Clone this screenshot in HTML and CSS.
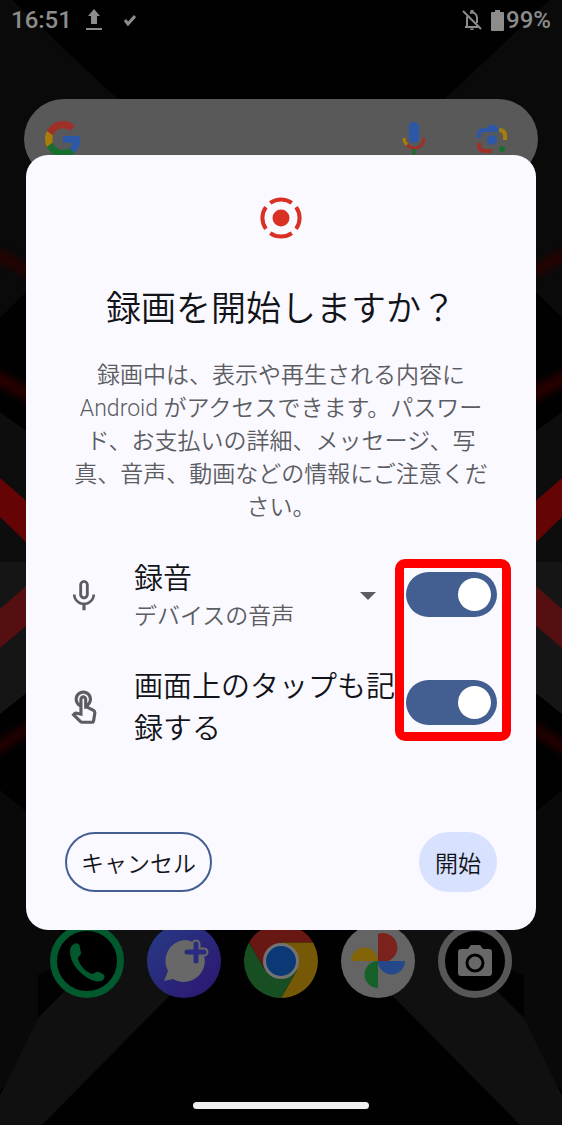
FILE: index.html
```html
<!DOCTYPE html>
<html lang="ja">
<head>
    <meta charset="UTF-8">
    <meta name="viewport" content="width=device-width, initial-scale=1.0">
    <title>画面の録画</title>
    <link rel="stylesheet" href="styles.css">
</head>
<body>

    <div class="phone">

        <!-- Wallpaper -->
        <svg class="wallpaper" viewBox="0 0 562 1125" preserveAspectRatio="none" aria-hidden="true">
            <defs>
                <filter id="glow" x="-50%" y="-10%" width="200%" height="120%">
                    <feGaussianBlur stdDeviation="4"/>
                </filter>
                <g id="wall-half">
                    <path fill="#0a0a0a" d="M0 0H12L140 120V270L26 292 0 318z"/>
                    <path fill="#2c0404" filter="url(#glow)" d="M-9 245l49 28v10L-9 257zM-9 368l49 25v14L-9 382zM-9 746l49-30v10L-9 758zM-9 876l49-30v10L-9 888z"/>
                    <path fill="#0d0d0d" d="M0 412l60 44v106H0z"/>
                    <path fill="#151515" d="M0 562h60v104L0 714z"/>
                    <path fill="#640405" d="M0 478l60 52v45L0 517z"/>
                    <path fill="#560f11" d="M0 609l60-53v41L0 648z"/>
                    <path fill="#090909" d="M0 790l60 50v200L0 1090z"/>
                    <path fill="#020202" d="M38 975l30-12v30l-30 25z"/>
                    <path fill="#101010" d="M70 915H190V975L42 1125H0V1096L38 1018 82 974z"/>
                </g>
            </defs>
            <rect width="562" height="1125" fill="#010101"/>
            <use href="#wall-half"/>
            <use href="#wall-half" transform="matrix(-1 0 0 1 562 0)"/>
        </svg>

        <header class="status-bar">
            <div class="status-group">
                <span>16:51</span>
                <svg class="status-upload" width="18" height="22" viewBox="0 0 18 22" aria-hidden="true">
                    <path fill="currentColor" d="M9 0l6 7h-3v8H6V7H3zM1 19h16v2H1z"/>
                </svg>
                <svg width="12" height="12" viewBox="0 0 12 12" aria-hidden="true">
                    <path fill="none" stroke="currentColor" stroke-width="3" d="M1 6l3 4 7-8"/>
                </svg>
            </div>
            <div class="status-group status-right">
                <svg width="20" height="21" viewBox="0 0 20 21" aria-hidden="true">
                    <g fill="none" stroke="currentColor" stroke-width="2">
                        <path d="M1 1l18 18M3 17h13M5 17V8c0-1 .3-2 1-3M8 3c4-1.500 7 1 7 5v5"/>
                    </g>
                    <path fill="currentColor" d="M8.500 0h3v3h-3zM8 18.500h4c0 2-4 2-4 0z"/>
                </svg>
                <svg class="battery" width="13" height="21" viewBox="0 0 13 21" aria-hidden="true">
                    <path fill="currentColor" d="M4 0h5v2h3q1 0 1 1v17q0 1-1 1H1q-1 0-1-1V3q0-1 1-1h3z"/>
                </svg>
                <span>99%</span>
            </div>
        </header>

        <div class="search-bar">
            <svg class="google" width="36" height="36" viewBox="0 0 48 48" aria-hidden="true">
                <path fill="#9f3028" d="M24 9.500c3.540 0 6.710 1.220 9.210 3.600l6.850-6.850C35.900 2.380 30.470 0 24 0 14.620 0 6.510 5.380 2.560 13.220l7.980 6.190C12.430 13.720 17.740 9.500 24 9.500z"/>
                <path fill="#2d58a8" d="M46.980 24.550c0-1.570-.15-3.090-.38-4.550H24v9.020h12.940c-.58 2.960-2.260 5.480-4.780 7.180l7.730 6c4.510-4.180 7.090-10.360 7.090-17.650z"/>
                <path fill="#a87e08" d="M10.530 28.590c-.48-1.450-.76-2.990-.76-4.590s.27-3.140.76-4.590l-7.980-6.190C.92 16.460 0 20.120 0 24s.92 7.540 2.560 10.780z"/>
                <path fill="#176e2e" d="M24 48c6.480 0 11.930-2.130 15.890-5.810l-7.730-6c-2.150 1.450-4.920 2.300-8.160 2.300-6.260 0-11.570-4.220-13.470-9.910l-7.980 6.190C6.510 42.620 14.620 48 24 48z"/>
            </svg>
            <svg width="24" height="36" viewBox="0 0 24 36" aria-hidden="true">
                <rect x="7" y="1" width="10" height="21" rx="5" fill="#2d58a8"/>
                <path fill="none" stroke="#a87e08" stroke-width="3" d="M2 17c0 3 1 5 3 7"/>
                <path fill="none" stroke="#9f3028" stroke-width="3" d="M5 24c6 6 17 3 17-7"/>
                <path fill="#176e2e" d="M10.500 28h3v8h-3z"/>
            </svg>
            <svg class="lens" width="32" height="32" viewBox="0 0 32 32" aria-hidden="true">
                <g fill="none" stroke-width="4">
                    <path stroke="#2d58a8" d="M3 15v-3q0-5 5-5h15"/>
                    <path stroke="#a87e08" d="M23 7q6 0 6 6v4"/>
                    <path stroke="#9f3028" d="M3 20v2q0 6 6 6h7"/>
                </g>
                <path fill="#2d58a8" d="M10 7l3-5h7l3 5z"/>
                <circle cx="16" cy="17" r="5" fill="#2d58a8"/>
                <circle cx="26" cy="26" r="3" fill="#176e2e"/>
            </svg>
        </div>

        <nav class="dock" aria-label="ドック">
            <a href="#" aria-label="電話">
                <svg viewBox="0 0 74 74">
                    <circle cx="37" cy="37" r="33.500" fill="#000" stroke="#02592d" stroke-width="7"/>
                    <path fill="#02592d" d="M24 20c3-2 6 0 6 4l1 5c0 3-3 3-3 6 2 7 8 13 14 15 3 0 4-3 7-2l4 2c2 1 2 4 0 6-4 3-11 1-17-3C25 45 20 36 20 27c0-4 2-6 4-7z"/>
                </svg>
            </a>
            <a href="#" aria-label="メッセージ">
                <svg viewBox="0 0 74 74">
                    <defs>
                        <linearGradient id="msg" x1="0" y1="0" x2="1" y2="1">
                            <stop offset="0" stop-color="#263c86"/>
                            <stop offset="1" stop-color="#2d1470"/>
                        </linearGradient>
                    </defs>
                    <circle cx="37" cy="37" r="37" fill="url(#msg)"/>
                    <path fill="#686868" d="M37 16a21 21 0 1 1-11 39L17 57l4-10A21 21 0 0 1 37 16z"/>
                    <path fill="none" stroke="#686868" stroke-width="9" stroke-linecap="round" d="M49 20v16M41 28h16"/>
                    <path fill="none" stroke="#2a2a80" stroke-width="5" stroke-linecap="round" d="M49 20v17M40 28h17"/>
                </svg>
            </a>
            <a href="#" aria-label="Chrome">
                <svg viewBox="0 0 74 74">
                    <path fill="#681812" d="M5 18.500A37 37 0 0 1 69 18.500H37L21 46z"/>
                    <path fill="#755907" d="M69 18.500A37 37 0 0 1 37 74l16-28-16-27.500z"/>
                    <path fill="#174f22" d="M5 18.500A37 37 0 0 0 37 74l16-28H21z"/>
                    <circle cx="37" cy="37" r="18" fill="#737373"/>
                    <circle cx="37" cy="37" r="15" fill="#0a3975"/>
                </svg>
            </a>
            <a href="#" aria-label="フォト">
                <svg viewBox="0 0 74 74">
                    <circle cx="37" cy="37" r="37" fill="#646464"/>
                    <path fill="#7b221c" d="M37 10a13.500 13.500 0 0 1 10 27H37z"/>
                    <path fill="#25488b" d="M37 37h27a13.500 13.500 0 0 1-27 0z"/>
                    <path fill="#16602a" d="M37 37v27a13.500 13.500 0 0 1 0-27z"/>
                    <path fill="#836409" d="M37 37H10a13.500 13.500 0 0 1 27 0z"/>
                </svg>
            </a>
            <a href="#" aria-label="カメラ">
                <svg viewBox="0 0 74 74">
                    <circle cx="37" cy="37" r="33.500" fill="#000" stroke="#575757" stroke-width="7"/>
                    <path fill="#686868" d="M23 25h7l3-4h9l3 4h6q3 0 3 3v21q0 3-3 3H23q-3 0-3-3V28q0-3 3-3z"/>
                    <circle cx="37" cy="39" r="8" fill="#686868" stroke="#000" stroke-width="3"/>
                </svg>
            </a>
        </nav>

        <div class="nav-handle"></div>

        <div class="overlay">
            <main class="dialog" role="dialog" aria-labelledby="dialog-title">
                <svg class="record-icon" width="42" height="42" viewBox="0 0 42 42" aria-hidden="true">
                    <circle cx="21" cy="21" r="8.500" fill="#d93025"/>
                    <path fill="none" stroke="#d93025" stroke-width="4" d="M10.200 5.900A18.500 18.500 0 0 1 31.800 5.900M36.100 10.200A18.500 18.500 0 0 1 36.100 31.800M31.800 36.100A18.500 18.500 0 0 1 10.200 36.100M5.900 31.800A18.500 18.500 0 0 1 5.900 10.200"/>
                </svg>
                <h1 class="title" id="dialog-title">録画を開始しますか？</h1>
                <p class="message">録画中は、表示や再生される内容に Android がアクセスできます。パスワード、お支払いの詳細、メッセージ、写真、音声、動画などの情報にご注意ください。</p>

                <div class="options">
                    <div class="option">
                        <svg class="option-icon" viewBox="0 0 24 24" aria-hidden="true">
                            <path fill="currentColor" d="M12 14c1.660 0 3-1.340 3-3V5c0-1.660-1.340-3-3-3S9 3.340 9 5v6c0 1.660 1.340 3 3 3zm-1.200-9.100c0-.66.54-1.200 1.200-1.200s1.200.54 1.200 1.200l-.01 6.200c0 .66-.53 1.200-1.190 1.200s-1.200-.54-1.200-1.200V4.900zM17.300 11c0 3-2.540 5.100-5.300 5.100S6.700 14 6.700 11H5c0 3.410 2.720 6.230 6 6.720V21h2v-3.280c3.280-.48 6-3.300 6-6.720h-1.700z"/>
                        </svg>
                        <div class="option-text">
                            <label class="option-name" for="audio-toggle">録音</label>
                            <select class="audio-source" aria-label="音声の種類">
                                <option>デバイスの音声</option>
                                <option>マイク</option>
                            </select>
                        </div>
                        <svg class="arrow" width="16" height="8" viewBox="0 0 16 8" aria-hidden="true">
                            <path fill="currentColor" d="M0 0h16L8 8z"/>
                        </svg>
                        <input class="switch" type="checkbox" role="switch" id="audio-toggle" checked>
                    </div>
                    <div class="option">
                        <svg class="option-icon" viewBox="0 0 24 24" aria-hidden="true">
                            <path fill="currentColor" d="M18.190 12.440l-3.240-1.620c1.290-1 2.120-2.560 2.120-4.320 0-3.030-2.470-5.500-5.500-5.500s-5.500 2.470-5.500 5.500c0 2.130 1.220 3.980 3 4.890v3.260c-2.080-.44-2.010-.44-2.260-.44-.53 0-1.030.21-1.410.59L4 16.220l5.090 5.090c.43.44 1.030.69 1.650.69h6.300c.98 0 1.810-.7 1.970-1.670l.8-4.710c.22-1.300-.43-2.580-1.620-3.180zm-.35 2.850l-.8 4.710h-6.300c-.09 0-.17-.04-.24-.1l-3.680-3.680 4.250.89V6.500c0-.28.22-.5.5-.5s.5.22.5.5v6h1.760l3.460 1.730c.4.2.62.63.55 1.060zM8.070 6.500c0-1.930 1.570-3.500 3.500-3.500s3.500 1.570 3.500 3.500c0 .95-.38 1.810-1 2.440V6.500c0-1.380-1.120-2.500-2.500-2.500s-2.500 1.120-2.500 2.500v2.440c-.62-.63-1-1.490-1-2.440z"/>
                        </svg>
                        <label class="option-text option-name" for="tap-toggle">画面上のタップも記録する</label>
                        <input class="switch" type="checkbox" role="switch" id="tap-toggle" checked>
                    </div>
                    <div class="highlight"></div>
                </div>

                <div class="actions">
                    <button type="button" class="btn btn-cancel">キャンセル</button>
                    <button type="button" class="btn btn-start">開始</button>
                </div>
            </main>
        </div>
    </div>

</body>
</html>
```
FILE: styles.css
```css
:root {
    --surface: #faf9ff;
    --text-primary: #121318;
    --text-secondary: #5c5d62;
    --accent: #435e91;
    --accent-light: #d8e2ff;
    --status: #8c8c8c;
    --highlight: #ff0000;
}

*, *::before, *::after {
    box-sizing: border-box;
    margin: 0;
    padding: 0;
}

body {
    font-family: Roboto, 'Noto Sans CJK JP', sans-serif;
    font-weight: 350;
    background: #000;
    color: var(--text-primary);
}

svg {
    display: block;
    flex-shrink: 0;
}

.phone {
    position: relative;
    display: flex;
    flex-direction: column;
    min-height: 100vh;
    overflow: hidden;
    isolation: isolate;
}

.wallpaper {
    position: absolute;
    inset: 0;
    width: 100%;
    height: 100%;
    z-index: -1;
}

/* Status bar */
.status-bar {
    display: flex;
    justify-content: space-between;
    align-items: center;
    height: 40px;
    padding: 0 11px;
    color: var(--status);
    font-size: 24px;
    font-weight: 500;
}

.status-group {
    display: flex;
    align-items: center;
    gap: 13px;
}

.status-upload {
    margin-right: 8px;
}

.status-right {
    gap: 2px;
}

.battery {
    margin-left: 7px;
}

/* Home screen */
.search-bar {
    display: flex;
    align-items: center;
    height: 80px;
    margin: 59px 24px 0;
    padding: 0 30px 0 21px;
    border-radius: 40px;
    background: #595959;
}

.google {
    margin-right: auto;
}

.lens {
    margin-left: 50px;
}

.dock {
    display: flex;
    justify-content: space-between;
    margin: auto 50px 104px;
}

.dock svg {
    width: 74px;
    height: 74px;
}

.nav-handle {
    width: 176px;
    height: 7px;
    margin: 0 auto 16px;
    border-radius: 4px;
    background: #f0eff0;
}

/* Dialog */
.overlay {
    position: absolute;
    inset: 0;
    display: flex;
    align-items: center;
    justify-content: center;
    padding: 0 26px 40px;
}

.dialog {
    width: 100%;
    max-width: 560px;
    padding: 42px 39px 38px;
    border-radius: 22px;
    background: var(--surface);
}

.record-icon {
    margin: 0 auto 44px;
}

.title {
    margin-bottom: 22px;
    font-size: 35px;
    font-weight: inherit;
    line-height: 54px;
    text-align: center;
}

.message {
    padding: 0 8px;
    color: var(--text-secondary);
    font-size: 23px;
    line-height: 33px;
    text-align: center;
}

.options {
    position: relative;
    display: grid;
    gap: 33px;
    margin: 34px 0 82px;
}

.option {
    display: flex;
    align-items: center;
}

.option-icon {
    width: 38px;
    height: 38px;
    margin-right: 31px;
    color: var(--text-secondary);
}

.option-text {
    flex: 1;
    min-width: 0;
}

.option-name {
    display: block;
    font-size: 29px;
    line-height: 42px;
}

.audio-source {
    display: block;
    width: 100%;
    border: 0;
    appearance: none;
    background: none;
    color: var(--text-secondary);
    font: inherit;
    font-size: 23px;
    line-height: 33px;
}

.arrow {
    margin-right: 30px;
    color: var(--text-secondary);
}

.switch {
    flex-shrink: 0;
    align-self: flex-start;
    display: flex;
    align-items: center;
    width: 91px;
    height: 45px;
    margin-top: 14px;
    padding: 6px;
    border-radius: 23px;
    appearance: none;
    background: #c4c6d0;
    cursor: pointer;
}

.switch::before {
    content: "";
    width: 33px;
    height: 33px;
    border-radius: 50%;
    background: #fff;
}

.switch:checked {
    justify-content: flex-end;
    background: var(--accent);
}

/* Frame drawn over both switches */
.highlight {
    position: absolute;
    inset: 1px -14px 9px auto;
    width: 116px;
    border: 9px solid var(--highlight);
    border-radius: 10px;
    pointer-events: none;
}

.actions {
    display: flex;
    justify-content: space-between;
}

.btn {
    height: 60px;
    padding: 0 14px;
    border: 2px solid transparent;
    border-radius: 30px;
    background: none;
    color: var(--text-primary);
    font: inherit;
    font-size: 23px;
    cursor: pointer;
}

.btn-cancel {
    border-color: var(--accent);
}

.btn-start {
    border-color: var(--accent-light);
    background: var(--accent-light);
}
```
